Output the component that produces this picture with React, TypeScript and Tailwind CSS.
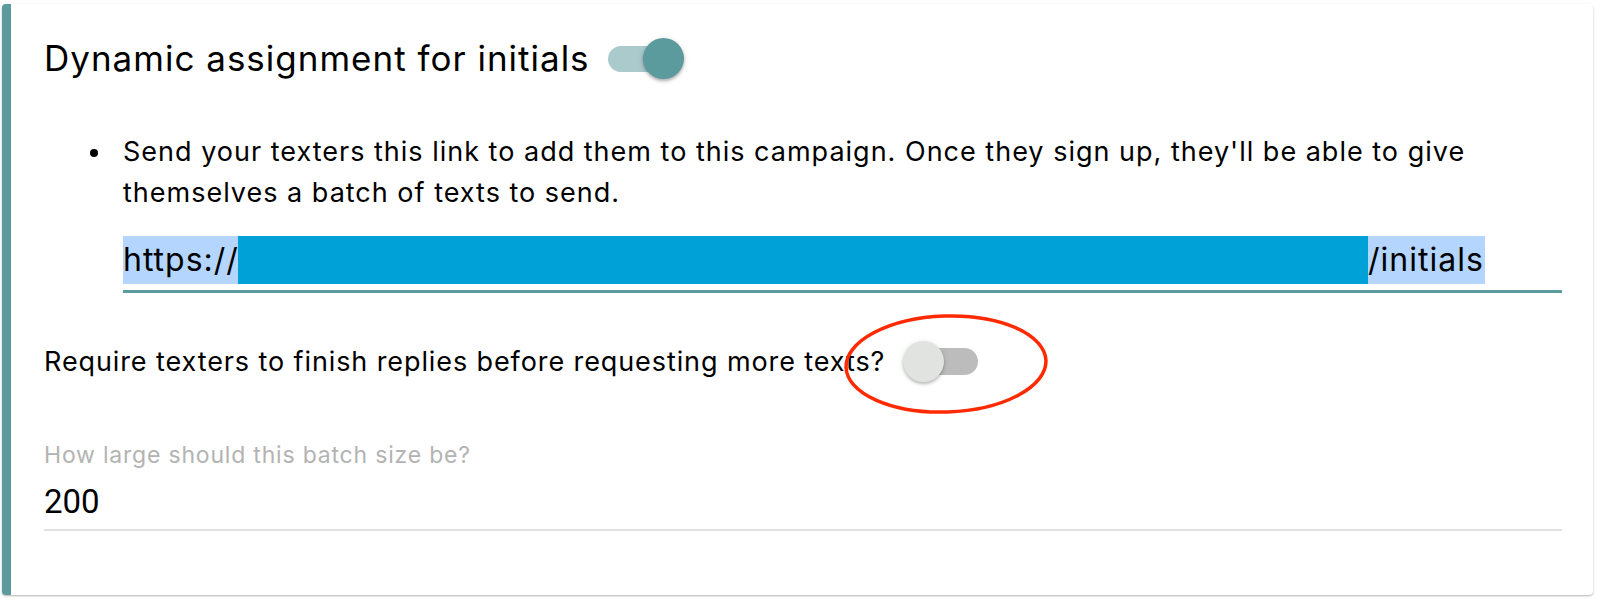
import React from "react";

function Switch({ on }: { on: boolean }) {
  return (
    <div className="relative h-[41px] w-[78px] shrink-0">
      <div
        className={
          on
            ? "absolute left-[2px] right-[4px] top-[8px] h-[26px] rounded-full bg-[#abcacc]"
            : "absolute left-[4px] right-[3px] top-[7px] h-[27px] rounded-full bg-[#bcbcbc]"
        }
      />
      <div
        className={
          on
            ? "absolute right-0 top-0 h-[41px] w-[41px] rounded-full bg-[#5b9a9d] shadow-[0_2px_3px_rgba(0,0,0,0.25),0_1px_6px_rgba(0,0,0,0.12)]"
            : "absolute left-0 top-0 h-[41px] w-[41px] rounded-full bg-[#e1e3e0] shadow-[0_2px_3px_rgba(0,0,0,0.22),0_1px_6px_rgba(0,0,0,0.1)]"
        }
      />
    </div>
  );
}

export default function App() {
  return (
    <div className="min-h-[603px] bg-white pl-[2px] pr-[7px] pt-[4px] font-[family-name:Inter,sans-serif] text-black">
      <div className="h-[591px] rounded-[4px] border-l-[9px] border-[#5b9a9d] bg-white pl-[33px] pr-[31px] pt-[34px] shadow-[0_1px_3px_rgba(0,0,0,0.2),0_1px_1px_rgba(0,0,0,0.12)]">
        {/* Title row */}
        <div className="flex h-[41px] items-center gap-[16px]">
          <span className="text-[35px] leading-none tracking-[1px]">Dynamic assignment for initials</span>
          <Switch on />
        </div>

        {/* Bullet */}
        <div className="mt-[52px] flex pl-[46px]">
          <div className="mt-[18px] h-[8px] w-[8px] shrink-0 rounded-full bg-black" />
          <div className="ml-[25px] flex-1">
            <p className="text-[27px] leading-[41px] tracking-[1px]">
              Send your texters this link to add them to this campaign. Once they sign up, they'll be able to give
              <br />
              themselves a batch of texts to send.
            </p>
            <div className="mt-[23px] border-b-[3px] border-[#5b9a9d] pb-[6px]">
              <div className="flex h-[48px] items-stretch text-[32px] leading-[48px] tracking-[1px]">
                <span className="w-[115px] shrink-0 bg-[#b4d5fe]">https://</span>
                <span className="w-[1130px] shrink-0 bg-[#00a1d7]" />
                <span className="w-[117px] shrink-0 bg-[#b4d5fe]">/initials</span>
              </div>
            </div>
          </div>
        </div>

        {/* Require row */}
        <div className="mt-[48px] flex h-[41px] items-center gap-[18px]">
          <span className="text-[27px] leading-none tracking-[0.9px]">
            Require texters to finish replies before requesting more texts?
          </span>
          <div className="relative">
            <Switch on={false} />
            <svg
              className="pointer-events-none absolute left-[-60px] top-[-28px]"
              width="206"
              height="104"
              viewBox="0 0 206 104"
            >
              <ellipse
                cx="103"
                cy="51"
                rx="100"
                ry="48"
                fill="none"
                stroke="#ff2a00"
                strokeWidth="3.5"
                transform="rotate(-2 103 51)"
              />
            </svg>
          </div>
        </div>

        {/* Batch size */}
        <div className="mt-[59px] text-[23px] leading-[28px] tracking-[0.8px] text-[#b3b3b3]">
          How large should this batch size be?
        </div>
        <div className="mt-[14px] border-b-[2px] border-[#e2e2e0] pb-[8px]">
          <div className="font-[family-name:Roboto,sans-serif] text-[33px] leading-[38px]">200</div>
        </div>
      </div>
    </div>
  );
}
